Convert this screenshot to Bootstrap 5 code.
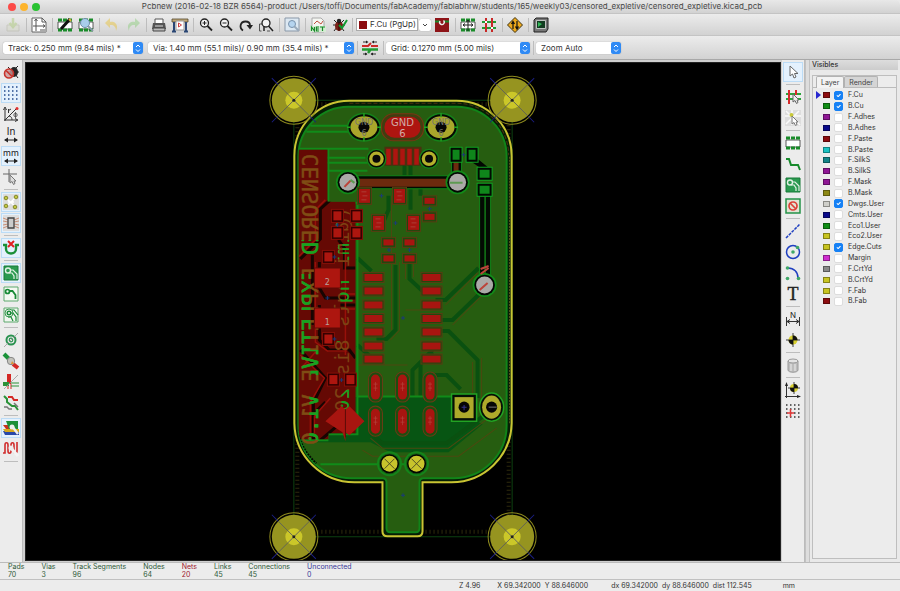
<!DOCTYPE html>
<html lang="en">
<head>
<meta charset="utf-8">
<meta name="viewport" content="width=device-width, initial-scale=1">
<title>Pcbnew</title>
<link href="https://cdn.jsdelivr.net/npm/bootstrap@5.3.0/dist/css/bootstrap.min.css" rel="stylesheet">
<style>
body{font-family:Inter,"Liberation Sans",sans-serif;font-size:8px;line-height:12px;color:#333;background:#e9e9e9}
.titlebar{height:14px;background:linear-gradient(#e8e8e8,#d2d2d2);border-bottom:1px solid #c4c4c4;line-height:13px;color:#484848;border-radius:5px 5px 0 0;flex:none}
.light{width:8px;height:8px;border:0;border-radius:50%;padding:0}
.light-r{background:#fc4b48}.light-y{background:#fdb42c}.light-g{background:#28c231}
.window-title{padding-right:44px}
.toolrow{background:linear-gradient(#ececec,#d2d2d2);border-bottom:1px solid #c4c4c4;gap:1px;padding:0 3px;flex:none}
.toolrow-main{height:22px}
.toolrow-opts{height:24px;border-bottom-color:#a8a8a8}
.tool{width:20px;height:20px;padding:0;border:1px solid transparent;border-radius:0;background:none;display:flex;align-items:center;justify-content:center;flex:none}
.tool svg{width:16px;height:16px;overflow:visible}
.tool.pale{opacity:.45}
.tool.picked{background:#e4f1fd;border-color:#bcdcf6}
.vline{width:1px;height:14px;background:#bdbdbd;margin:0 1px 0 2px;flex:none}
.hline{width:14px;height:1px;background:#bdbdbd;margin:1px 0;flex:none}
.picker{appearance:none;height:12px;border:0;border-radius:2px;padding:0 12px 0 5px;font-size:8px;line-height:12px;color:#333;box-shadow:0 0 1px #888;background:#fff url("data:image/svg+xml,%3Csvg xmlns='http://www.w3.org/2000/svg' width='10' height='12'%3E%3Crect width='10' height='12' rx='2' fill='%232f8af5'/%3E%3Cpath d='M3 5l2-2 2 2M3 7.500l2 2 2-2' fill='none' stroke='white'/%3E%3C/svg%3E") right center no-repeat}
.picker-track{width:140px}.picker-via{width:206px}.picker-grid{width:144px}.picker-zoom{width:85px}
.layerbox{height:13px;width:62px;background:#fff;border:1px solid #aaa;padding:0 2px;gap:3px;margin-left:1px}
.layerbox output{line-height:11px;white-space:nowrap}
.chip{width:8px;height:8px;flex:none;background:#8c0c10}
.dropbtn{width:12px;height:12px;padding:0;border:0;background:#fff;border-radius:2px;display:flex;align-items:center;justify-content:center;box-shadow:0 0 1px #888}
.sidetools{width:23px;gap:1px;padding-top:2px;background:#ececec;border-right:1px solid #bbb;flex:none}
.board{margin:2px 1px 1px 2px;background:#000;border:1px solid #222;min-width:0}
.board svg{width:100%;height:0;min-height:100%;display:block}
.work{background:#cfcfcf;min-height:0}
.sash{width:5px;background:#ddd;border:solid #c2c2c2;border-width:0 1px}
.visibles{width:90px;background:#e9e9e9;padding-right:2px}
.visibles h2{font-size:7px;line-height:10px;margin:0;padding-left:2px;background:linear-gradient(#ddd,#ccc);color:#333}
.layerframe{border:1px solid #bebebe;margin:5px 1px 3px 2px;background:#ececec}
.layertabs{border-bottom:1px solid #bbb;padding-left:3px;height:12px}
.layertabs .nav-link{font-size:7px;line-height:10px;padding:1px 4px 0;color:#444;border:1px solid #b2b2b2;border-bottom:0;border-radius:2px 2px 0 0;background:#d5d5d5;margin:0;height:11px}
.layertabs .nav-link.active{background:#f3f3f3;height:12px}
.layers{height:217px;margin:2px 0 0;font-size:7px;line-height:10px}
.layers li{display:flex;align-items:center;flex:1 1 0;min-height:0;padding-left:10px}
.layers .current{padding-left:3px}
.layers .current::before{content:"";width:0;height:0;border:solid transparent;border-width:4px 0 4px 5px;border-left-color:#2828d0;margin-right:2px}
.swatch{width:7px;height:6px;border:1px solid #0005;margin-right:4px;flex:none}
.layers .form-check-input{width:9px;height:9px;margin:0 5px 0 0;border-radius:2px;border-color:#ddd;flex:none}
.layers .form-check-input:checked{background-color:#1681f5;border-color:#1681f5}
.s-red{background:#8c0c10}.s-green{background:#0f8c14}.s-purple{background:#8e1694}.s-navy{background:#0a0a8a}.s-cyan{background:#19c2c2}.s-teal{background:#128488}.s-olive{background:#8c8815}.s-white{background:#cfcfca}.s-yellow{background:#c8c420}.s-pink{background:#cf2ccf}.s-gray{background:#888}
.stats{background:#ececec;border-top:1px solid #bbb;font-size:7px;line-height:8px;padding:0 8px;gap:17px;color:#2e5a38;flex:none}
.stats dt{font-weight:400}.stats dd{margin:0}
.st-nets{color:#a02030}.st-un{color:#3a3a9a}
.coords{background:#ececec;border-top:1px solid #c0c0c0;font-size:7px;line-height:11px;padding-left:51%;white-space:pre;flex:none}
.gap-a{margin-right:17px}.gap-b{margin-right:23px}.gap-c{margin-right:31px}
</style>
<script src="https://cdn.jsdelivr.net/npm/bootstrap@5.3.0/dist/js/bootstrap.bundle.min.js"></script>
</head>
<body class="d-flex flex-column vh-100">
<svg width="0" height="0" class="position-absolute" aria-hidden="true">
<defs>
<symbol id="mag" viewBox="0 0 16 16"><circle cx="6.500" cy="6" r="4" fill="#f4f4f4" stroke="#222" stroke-width="1.300"/><path d="M9.500 9l4.500 4.500" stroke="#222" stroke-width="1.800"/></symbol>
<symbol id="bug" viewBox="0 0 16 16"><path d="M3 3l3 3M13 3l-3 3M2 8h12M3 14l3-4M13 14l-3-4" stroke="#222" fill="none"/><ellipse cx="8" cy="9" rx="4" ry="5" fill="#7a2018"/><circle cx="8" cy="4" r="2.200" fill="#222"/><path d="M8 5v9" stroke="#300"/></symbol>
<symbol id="chip" viewBox="0 0 16 16"><path d="M1 5h14v7H1z" fill="#fff" stroke="#333" stroke-width=".8"/><g fill="#1a8c2a"><path d="M1 1.500h4v3H1zM6 1.500h4v3H6zM11 1.500h4v3h-4zM1 11.500h4v3H1zM6 11.500h4v3H6zM11 11.500h4v3h-4z"/></g></symbol>
<symbol id="target" viewBox="0 0 16 16"><circle cx="8" cy="8" r="4.500" fill="#d8d030"/><path d="M8 8V3.500A4.500 4.500 0 0 1 12.500 8zM8 8v4.500A4.500 4.500 0 0 1 3.500 8z" fill="#111"/><path d="M8 1v14M1 8h14" stroke="#111" stroke-width=".8"/></symbol>
<symbol id="arrow" viewBox="0 0 16 16"><path d="M5 2v10l2.500-2 1.500 4 2-1-1.500-3.500H13z" fill="#fff" stroke="#666"/></symbol>
<symbol id="zone" viewBox="0 0 16 16"><path d="M1 1h14v14H1z" fill="#2b9a50" stroke="#187a38"/><circle cx="5" cy="5.500" r="2.500" fill="none" stroke="#e2f0e4" stroke-width="1.400"/><path d="M7.500 5h2.500l4 4v5M6 8h3l2 3v3" stroke="#e2f0e4" stroke-width="1.200" fill="none"/></symbol>
</defs>
</svg>

<header class="titlebar d-flex align-items-center">
<div class="d-flex ps-1 gap-1 ms-1 me-2">
<button class="light light-r" aria-label="Close"></button><button class="light light-y" aria-label="Minimize"></button><button class="light light-g" aria-label="Zoom"></button>
</div>
<div class="window-title flex-grow-1 text-center text-nowrap overflow-hidden">Pcbnew (2016-02-18 BZR 6564)-product /Users/toffi/Documents/fabAcademy/fablabhrw/students/165/weekly03/censored_expletive/censored_expletive.kicad_pcb</div>
</header>

<nav class="toolrow toolrow-main d-flex align-items-center" aria-label="Main tools">
<button class="tool pale" aria-label="Save"><svg viewBox="0 0 16 16"><path d="M2 8h12v6H2z" fill="#d8dcc8" stroke="#b0b0a0"/><path d="M8 1v8M4.500 6L8 10l3.500-4" fill="none" stroke="#a8c870" stroke-width="2.500"/></svg></button>
<span class="vline"></span>
<button class="tool" aria-label="Page settings"><svg viewBox="0 0 16 16"><path d="M1 1h10l4 4v10H1z" fill="#fff" stroke="#666"/><path d="M11 1v4h4M5 2v12M2 9h12M3.500 4L5 2l1.500 2M12 7.500L14 9l-2 1.500" fill="none" stroke="#555"/><path d="M9 12h6v3H9z" fill="#aaa"/></svg></button>
<span class="vline"></span>
<button class="tool" aria-label="Module editor"><svg viewBox="0 0 16 16"><use href="#chip"/><path d="M4 12L13 2" stroke="#111" stroke-width="3"/><path d="M12 2l2 2" stroke="#e0b040" stroke-width="2"/></svg></button>
<button class="tool" aria-label="Module viewer"><svg viewBox="0 0 16 16"><use href="#chip"/><circle cx="7" cy="6" r="4.500" fill="#a8cdec" stroke="#6e8ea8"/><path d="M10 9l5 5" stroke="#89a" stroke-width="2"/></svg></button>
<span class="vline"></span>
<button class="tool pale" aria-label="Undo"><svg viewBox="0 0 16 16"><path d="M12 14c3-6-1-10-6-9V1L1 6l5 5V8c3-.5 6 1 6 6z" fill="#e8c030"/></svg></button>
<button class="tool pale" aria-label="Redo"><svg viewBox="0 0 16 16"><path d="M4 14c-3-6 1-10 6-9V1l5 5-5 5V8c-3-.5-6 1-6 6z" fill="#88cc78"/></svg></button>
<span class="vline"></span>
<button class="tool" aria-label="Print"><svg viewBox="0 0 16 16"><path d="M4 2h8v5H4z" fill="#fff" stroke="#555"/><path d="M2 6h12l1 6H1z" fill="#555"/><path d="M2 11h12v3H2z" fill="#bbb" stroke="#444"/><path d="M4 9h8" stroke="#ddd"/></svg></button>
<button class="tool" aria-label="Plot"><svg viewBox="0 0 16 16"><path d="M0 2h16v3H0z" fill="#c0a878" stroke="#54482c" stroke-width=".8"/><path d="M4 4h8v9H4z" fill="#fff" stroke="#999"/><path d="M6.500 6l3 2-3 2z" fill="none" stroke="#d04040"/><path d="M2 5v9M14 5v9M0 14.500h4M12 14.500h4" stroke="#2a4674" stroke-width="2"/></svg></button>
<span class="vline"></span>
<div class="d-flex">
<button class="tool" aria-label="Zoom in"><svg viewBox="0 0 16 16"><use href="#mag"/><path d="M4.500 6h4M6.500 4v4" stroke="#222"/></svg></button>
<button class="tool" aria-label="Zoom out"><svg viewBox="0 0 16 16"><use href="#mag"/><path d="M4.500 6h4" stroke="#222"/></svg></button>
<button class="tool" aria-label="Redraw"><svg viewBox="0 0 16 16"><path d="M5 13.500C1 11 2 4.500 7.500 4.500c3 0 4.500 1.800 4.500 4" fill="none" stroke="#222" stroke-width="1.800"/><path d="M8.500 8h6.500l-3 4.500z" fill="#222"/></svg></button>
<button class="tool" aria-label="Zoom fit"><svg viewBox="0 0 16 16"><path d="M1.500 14V7h3M1.500 14h2M9 14h3" stroke="#555" fill="none"/><circle cx="8" cy="6" r="4" fill="#f4f4f4" stroke="#222" stroke-width="1.300"/><path d="M10.500 9l4.500 5M6 9v5" stroke="#222" stroke-width="1.500"/></svg></button>
</div>
<span class="vline"></span>
<button class="tool" aria-label="Find"><svg viewBox="0 0 16 16"><path d="M1 1h14v13H1z" fill="#dce8f2" stroke="#8a98a8"/><circle cx="8" cy="7" r="3.500" fill="#b5d4ef" stroke="#7892ac"/><path d="M10.500 9.500l4 4" stroke="#9ab" stroke-width="2"/></svg></button>
<span class="vline"></span>
<button class="tool" aria-label="Read netlist"><svg viewBox="0 0 16 16"><path d="M2 1h9l3 3v11H2z" fill="#f4f6f2" stroke="#aaa"/><path d="M4 7l3-3 4 3 2-3" fill="none" stroke="#c05040"/><path d="M0 9h16v6H0z" fill="#d6ecd4"/><path d="M1.500 14v-4l3 4v-4M9 10H6.500v4H9M6.500 12H9M10 10h5M12.500 10v4" fill="none" stroke="#178a28" stroke-width="1.200"/></svg></button>
<button class="tool" aria-label="Design rules check"><svg viewBox="0 0 16 16"><use href="#bug"/><path d="M8 8l3 3 5-8" fill="none" stroke="#129a30" stroke-width="2"/></svg></button>
<span class="vline"></span>
<div class="layerbox d-flex align-items-center"><span class="chip"></span><output>F.Cu (PgUp)</output></div>
<button class="dropbtn" aria-label="Choose layer"><svg width="6" height="4" viewBox="0 0 6 4"><path d="M1 1l2 2 2-2" fill="none" stroke="#444"/></svg></button>
<button class="tool" aria-label="Layer pair"><svg viewBox="0 0 16 16"><path d="M1 1h14v14H1z" fill="#8e1418"/><path d="M1 4.500h5M10 4.500h5" stroke="#1b8a2b" stroke-width="2"/><path d="M6 4a2.300 2.300 0 1 0 3.500-.5" fill="none" stroke="#eee" stroke-width="1.400"/></svg></button>
<span class="vline"></span>
<button class="tool" aria-label="Footprint mode"><svg viewBox="0 0 16 16"><use href="#chip"/><path d="M8 3v11M3 8h10M6.500 5L8 3l1.500 2M5 6.500L3 8l2 1.500M11 6.500L13 8l-2 1.500" stroke="#222" fill="none"/></svg></button>
<button class="tool" aria-label="Track mode"><svg viewBox="0 0 16 16"><path d="M1 5h14M1 11h14" stroke="#239a32" stroke-width="2"/><path d="M5 1v14M11 1v14" stroke="#c82826" stroke-width="2"/><path d="M4 4h2v2H4zM10 10h2v2h-2z" fill="#fff"/></svg></button>
<span class="vline"></span>
<button class="tool" aria-label="Fast push"><svg viewBox="0 0 16 16"><path d="M8 .5L15.500 8 8 15.500.5 8z" fill="#eea91c" stroke="#3c3010"/><path d="M6 12V5M4.500 7L6 4.500 7.500 7M10 4v7M8.500 9.500L10 12l1.500-2.500" fill="none" stroke="#111" stroke-width="1.200"/></svg></button>
<span class="vline"></span>
<button class="tool" aria-label="Scripting console"><svg viewBox="0 0 16 16"><path d="M3 1h12v11l-2 3H1V3z" fill="#777" stroke="#222"/><path d="M3.500 3.500h9v8h-9z" fill="#123c20" stroke="#ddd" stroke-width=".8"/><path d="M5 5l4 2-4 3z" fill="#32b858"/></svg></button>
</nav>

<nav class="toolrow toolrow-opts d-flex align-items-center" aria-label="Options">
<select class="picker picker-track" aria-label="Track width"><option>Track: 0.250 mm (9.84 mils) *</option></select>
<select class="picker picker-via ms-1" aria-label="Via size"><option>Via: 1.40 mm (55.1 mils)/ 0.90 mm (35.4 mils) *</option></select>
<span class="vline"></span>
<button class="tool" aria-label="Auto track width"><svg viewBox="0 0 16 16"><path d="M0 6h6l3-3M9 6h7" stroke="#cc2a28" stroke-width="2" fill="none"/><path d="M0 9.500h16M9 9l-3 4" stroke="#239a32" stroke-width="2.500"/><path d="M1 2h4M11 2h4M1 14h4M9 14h5" stroke="#333"/><path d="M4 .5L6.500 2 4 3.500zM12 .5L9.500 2 12 3.500zM3 12.500L5.500 14 3 15.500zM11 12.500L8.500 14l2.500 1.500z" fill="#222"/></svg></button>
<span class="vline"></span>
<select class="picker picker-grid" aria-label="Grid"><option>Grid: 0.1270 mm (5.00 mils)</option></select>
<span class="vline"></span>
<select class="picker picker-zoom" aria-label="Zoom"><option>Zoom Auto</option></select>
</nav>

<main class="work d-flex flex-grow-1">
<nav class="sidetools d-flex flex-column align-items-center" aria-label="Display options">
<button class="tool" aria-label="Rules checker off"><svg viewBox="0 0 16 16"><g transform="translate(2 0)"><path d="M3 3l3 3M13 2l-3 3M2 8h12M13 14l-3-4" stroke="#222" fill="none"/><ellipse cx="9" cy="8" rx="4" ry="5" fill="#252525"/></g><circle cx="6" cy="9.500" r="4.500" fill="#c99" fill-opacity=".8" stroke="#c8332b" stroke-width="1.600"/><path d="M3 6.500l6 6" stroke="#c8332b" stroke-width="1.600"/></svg></button>
<button class="tool picked" aria-label="Grid"><svg viewBox="0 0 16 16"><path d="M1 2h14M1 6h14M1 10h14M1 14h14" stroke="#234a8c" stroke-width="1.500" stroke-dasharray="1.500 2.500"/></svg></button>
<button class="tool" aria-label="Polar coordinates"><svg viewBox="0 0 16 16"><path d="M2 15V3M1 14h13M2 14L13 3M.5 4L2 1l1.500 3M12 12.500l3 1.500-3 1.500M5.500 3v4M5.500 4.500L8 3M9 14c0-2-1-4-3-4" fill="none" stroke="#333"/><circle cx="12.500" cy="9" r="1.700" fill="none" stroke="#444" stroke-width=".8"/><path d="M12.500 6v6" stroke="#444" stroke-width=".8"/><circle cx="14" cy="2.500" r="1.500" fill="#e03030"/></svg></button>
<button class="tool" aria-label="Inches"><svg viewBox="0 0 16 16"><text x="8" y="8" font-size="10" text-anchor="middle" fill="#222">In</text><path d="M2 13h12" stroke="#222"/><path d="M5 10.500L1 13l4 2.500zM11 10.500l4 2.500-4 2.500z" fill="#222"/></svg></button>
<button class="tool picked" aria-label="Millimetres"><svg viewBox="0 0 16 16"><text x="8" y="8" font-size="9" text-anchor="middle" fill="#222">mm</text><path d="M2 13h12" stroke="#222"/><path d="M5 10.500L1 13l4 2.500zM11 10.500l4 2.500-4 2.500z" fill="#222"/></svg></button>
<button class="tool" aria-label="Cursor shape"><svg viewBox="0 0 16 16"><path d="M6 0v13M0 5h14" stroke="#666"/><path d="M7 6v8l2-1.500 1.500 3 1.500-1-1-2.500h2z" fill="#ddd" stroke="#777"/></svg></button>
<span class="hline"></span>
<button class="tool picked" aria-label="Ratsnest"><svg viewBox="0 0 16 16"><path d="M0 0h16v16H0z" fill="#ddd"/><path d="M3 13L13 3M4 5l9 8M5 8h6" stroke="#fff" stroke-width="1.400"/><g fill="#c2c842" stroke="#84882c"><circle cx="3" cy="4" r="1.800"/><circle cx="13" cy="3" r="1.800"/><circle cx="3" cy="12" r="1.800"/><circle cx="12" cy="13" r="1.800"/></g></svg></button>
<button class="tool picked" aria-label="Module ratsnest"><svg viewBox="0 0 16 16"><path d="M0 0h16v16H0z" fill="#ddd"/><path d="M0 3l5 2M0 6l5 1M0 10l5-1M0 13l5-2M16 3l-5 2M16 6l-5 1M16 10l-5-1M16 13l-5-2" stroke="#c89078"/><path d="M5 3h6v10H5z" fill="#ccc" stroke="#444" stroke-width="1.300"/></svg></button>
<span class="hline"></span>
<button class="tool picked" aria-label="Auto delete"><svg viewBox="0 0 16 16"><path d="M0 5h3v4c0 6 10 6 10 0V5h3" fill="none" stroke="#1a8f38" stroke-width="2.400"/><path d="M5 1l6 6M11 1L5 7" stroke="#e02020" stroke-width="2"/></svg></button>
<span class="hline"></span>
<button class="tool picked" aria-label="Filled zones"><svg><use href="#zone"/></svg></button>
<button class="tool" aria-label="Hide zones"><svg viewBox="0 0 16 16"><path d="M1 1h14v14H1z" fill="#f4f8f2" stroke="#5ca86c"/><circle cx="4.500" cy="5.500" r="2" fill="none" stroke="#178a36" stroke-width="1.700"/><path d="M7 5h2.500l3 4v4" fill="none" stroke="#178a36" stroke-width="1.800"/></svg></button>
<button class="tool" aria-label="Zone outlines"><svg viewBox="0 0 16 16"><path d="M1 1h14v14H1z" fill="#f0f6ef" stroke="#5ca86c"/><circle cx="6" cy="6" r="4" fill="none" stroke="#3c9a55"/><circle cx="6" cy="6" r="1.800" fill="none" stroke="#178a36" stroke-width="1.400"/><path d="M8 6h2l3 4v4M5 10h3l2 4M9 3h2l4 5" fill="none" stroke="#178a36" stroke-width="1.200"/></svg></button>
<span class="hline"></span>
<button class="tool" aria-label="Pad sketch"><svg viewBox="0 0 16 16"><circle cx="8" cy="8" r="4.500" fill="none" stroke="#2a9250" stroke-width="2"/><circle cx="8" cy="8" r="1.800" fill="none" stroke="#2a9250" stroke-width="1.200"/><path d="M1 15L15 1" stroke="#999" stroke-width=".8"/></svg></button>
<button class="tool" aria-label="Via sketch"><svg viewBox="0 0 16 16"><path d="M1 1l5 5" stroke="#1a9238" stroke-width="4"/><path d="M10 11l5 4" stroke="#d42824" stroke-width="4"/><circle cx="8" cy="8" r="3.700" fill="#c4c4bc" stroke="#888"/><path d="M9 8l2 3H8z" fill="#e09030"/></svg></button>
<button class="tool" aria-label="Track sketch"><svg viewBox="0 0 16 16"><path d="M6 0v10" stroke="#d42824" stroke-width="4"/><path d="M5 10v5M8 10v5" stroke="#d42824"/><path d="M0 10h6" stroke="#2a9238" stroke-width="4"/><path d="M8 9h8M8 12h8" stroke="#2a9238"/><path d="M1 15L15 1" stroke="#999" stroke-width=".8"/></svg></button>
<button class="tool" aria-label="High contrast"><svg viewBox="0 0 16 16"><path d="M1 1l3 3v3l5 4h3l3 4" fill="none" stroke="#2a9238" stroke-width="2"/><path d="M5 2h4l2 3h4" fill="none" stroke="#d42824" stroke-width="2"/><path d="M1 12h3l2 2h3M11 8l4 4" fill="none" stroke="#777" stroke-width="1.500"/></svg></button>
<span class="hline"></span>
<button class="tool picked" aria-label="Layers manager"><svg viewBox="0 0 16 16"><path d="M0 11h16v4H2z" fill="#2848a8"/><path d="M0 9h16v3H2z" fill="#d4a820"/><path d="M0 5h15v4H3z" fill="#c83020"/><path d="M3 1h12v8H6z" fill="#1c8f38"/><path d="M9 6l6 8" stroke="#eee" stroke-width="2.500"/><circle cx="9" cy="7" r="2.500" fill="#eee"/></svg></button>
<button class="tool" aria-label="Microwave tools"><svg viewBox="0 0 16 16"><path d="M0 12h2V4c0-3 3-3 3 0v6c0 3 3 3 3 0V4c0-3 3-3 3 0v6c0 3 3 3 3 0V1" fill="none" stroke="#d02c2c" stroke-width="1.600"/><path d="M8 7l7 8" stroke="#f4f4f4" stroke-width="3"/><circle cx="8" cy="7" r="2.500" fill="#eee"/></svg></button>
<span class="hline"></span>
</nav>

<section class="board flex-grow-1" aria-label="Board canvas">
<svg viewBox="26 63 753 497" preserveAspectRatio="xMidYMid slice" role="img" aria-label="Printed circuit board">
<defs>
<g id="hole"><circle r="24" fill="none" stroke="#8e8a1e"/><circle r="22" fill="#969420"/><circle r="8.500" fill="#cbc729"/><path d="M-16-16L16 16M-16 16L16-16" stroke="#5c5f5c" stroke-width=".9"/><path d="M-22-22l6 6M22 22l-6-6M-22 22l6-6M22-22l-6 6" stroke="#1a1e80"/><circle r="1.500" fill="#222"/></g>
<g id="gndpad"><ellipse rx="17" ry="14.500" fill="#15831a"/><ellipse rx="15.500" ry="13" fill="#050a03"/><ellipse rx="13.500" ry="11" fill="#aaa62b"/><circle r="5.500" fill="#060606"/><path d="M-17 0h4M13 0h4M0-14v4M0 10v4" stroke="#23a020" stroke-width="1.500"/></g>
<g id="usbpad"><circle r="10" fill="#15831a"/><circle r="8.700" fill="#050a03"/><circle r="7.300" fill="#b4b02c"/><circle r="4" fill="#080808"/></g>
<g id="via"><circle r="12" fill="#128a19"/><circle r="10.300" fill="#030803"/><circle r="8.500" fill="#aaa9a7"/></g>
<g id="exit"><circle r="12.500" fill="#14851a"/><circle r="10.500" fill="#175c12"/><circle r="9.500" fill="#020602"/><circle r="8" fill="#c8c42c"/><path d="M-5-5L5 5M-5 5L5-5" stroke="#474722" stroke-width=".9"/></g>
<g id="icpad"><rect x="-10.500" y="-5" width="21" height="10" fill="#22480e" stroke="#573e12"/><rect x="-9" y="-3.500" width="18" height="7" fill="#a81510"/></g>
<g id="smd"><rect x="-7" y="-5" width="14" height="10" fill="#22480e" stroke="#573e12"/><rect x="-5" y="-3" width="10" height="6" fill="#a81510"/></g>
<g id="smdtall"><rect x="-7" y="-8.500" width="14" height="17" fill="#22480e" stroke="#573e12"/><rect x="-5.500" y="-7" width="11" height="14" fill="#a81510"/><path d="M-3-4h5M-2 0h5M-3 4h5" stroke="#b05048" stroke-width=".7"/></g>
<g id="slot"><rect x="-7" y="-15" width="14" height="30" rx="7" fill="#1d4e0f" stroke="#6a3c16"/><rect x="-4.500" y="-12.500" width="9" height="25" rx="4.500" fill="#a81510"/><path d="M0-5v9M-2-3h4M-2 1h4" stroke="#b4443c" stroke-width=".7"/></g>
<g id="rpad"><rect x="-6" y="-6.500" width="12" height="13" fill="#300" stroke="#861008"/><rect x="-4" y="-4.500" width="8" height="9" fill="#ad160f"/></g>
<clipPath id="redzone"><path d="M298 150h29v52h28v231h-27v6h-30z"/></clipPath>
<clipPath id="inside"><path d="M349 107H456a50 50 0 0 1 50 50V425a53 53 0 0 1-53 53H351a53 53 0 0 1-53-53V157a50 50 0 0 1 51-50z"/></clipPath>
<clipPath id="litleft" clipPathUnits="userSpaceOnUse"><path d="M298 240h23v22h-23zM298 274h12v95h-12zM310 350h11v25h-11zM309 385h12v55h-12z"/></clipPath>
<clipPath id="litright" clipPathUnits="userSpaceOnUse"><path d="M330 207h9v20h-9zM342 240h10v20h-10zM330 245h9v14h-9zM340 268h12v40h-12zM330 328h10v14h-10zM330 375h10v12h-10zM341 390h12v37h-12z"/></clipPath>
</defs>
<rect x="26" y="63" width="753" height="497" fill="#000"/>
<path d="M293.500 100.500h218v436h-218z" fill="none" stroke="#0d4010"/>
<path d="M297 104.500h211v427H297z" fill="none" stroke="#2e2a0c" stroke-width="4" stroke-dasharray="1 3"/>
<path d="M349 101H456a55 55 0 0 1 55 55V423a60 60 0 0 1-60 59H422V531q0 5-5 5H387q-5 0-5-5V482H354a60 60 0 0 1-60-59V156a55 55 0 0 1 55-55z" fill="#061e05" stroke="#c9c433" stroke-width="2"/>
<path d="M349 103.500H456a52 52 0 0 1 52 52" fill="none" stroke="#4c3212" stroke-dasharray="4 2"/>
<path d="M509 157V423" stroke="#5a5a1c" stroke-dasharray="2 1"/>
<path d="M349 107H456a50 50 0 0 1 50 50V425a53 53 0 0 1-53 53H423q-4 0-4 4V528q0 4-4 4H390q-4 0-4-4V482q0-4-4-4H351a53 53 0 0 1-53-53V157a50 50 0 0 1 51-50z" fill="#265d10" stroke="#118419" stroke-width="2"/>
<g clip-path="url(#inside)">
<path d="M355 397H452v22h20l10 5-34 28H390l-20-10H300v-9h55z" fill="#075513"/>
<g fill="none" stroke="#0a5010" stroke-width="4">
<path d="M395 265v65l-9 9h-10M409 262v17l13 12M404 160v22M410 150v60M388 196v14l-4 10M420 196v-16M478 268l-33 32h-10M482 291l-30 29h-16M440 331h8l29 29v38M412 398v-28l20-20M420 398v-34l12-12M357 258l14 13M357 345l20 18M434 375h12l14 14M370 433l12 10h64l38-28"/>
</g>
<g fill="none" stroke="#4c4810">
<path d="M399 262v68l-9 10M391 196v134M405 262v17M413 262v15M445 305l32-32M452 325l34-34M472 362v36M481 358v42M370 438l12 10h66l40-30M362 450l10 6h86l38-28M357 365h50M405 310h30"/>
</g>
<g stroke="#108b19" stroke-width="2" fill="none"><path d="M310 126h37M306 132h42M299 149h69M299 158h66M299 163h68M299 171h68M328 150v53h29v231h-30v6h-27M357 396.500h97M320 464h57M401 464h4"/></g>
<path d="M298 150h29v52h28v231h-27v6h-30z" fill="#650904"/>
<g clip-path="url(#redzone)">
<g fill="none" stroke="#170502" stroke-width="3"><path d="M330 200l-10 9v30l-20 20M338 240l6 8v20h12M312 255v70M319 262v26l6 10h30M340 298h16M340 305h16M319 305v35l10 10h20l6 8M300 350l25 28-12 25v35M325 402l-12 12v26M320 440l20-17"/></g>
<g fill="none" stroke="#97100a" stroke-width="1.500"><path d="M325 200l-10 10v30l-17 17M315 262v80l12 9h20M345 250v105M315 352l-13 15M300 355l24 23-14 24v32M330 398l-16 18v18M340 294h16M340 309h16"/></g>
</g>
<g font-family="DejaVu Sans Mono, monospace" font-size="21">
<text transform="translate(318 154) rotate(90) scale(1 -1)" fill="#7f4d14" stroke="#7f4d14" stroke-width=".5">CENSORED EXPLETIVE V1.0</text>
<g clip-path="url(#litleft)"><text transform="translate(318 154) rotate(90) scale(1 -1)" fill="#15a321" stroke="#15a321" stroke-width=".6">CENSORED EXPLETIVE V1.0</text></g>
<text transform="translate(349 207) rotate(90) scale(1 -1)" fill="#7d4213" font-size="20">(@imi hqls 8is 201</text>
<g clip-path="url(#litright)"><text transform="translate(349 207) rotate(90) scale(1 -1)" fill="#15a321" font-size="20">(@imi hqls 8is 201</text></g>
</g>
<path d="M296 180V423a58 58 0 0 0 20 40" fill="none" stroke="#020a02" stroke-width="2" stroke-dasharray="2 1"/>
</g>
<use href="#rpad" x="337" y="216"/><use href="#rpad" x="356" y="216"/><use href="#rpad" x="337" y="233"/><use href="#rpad" x="356" y="233"/>
<use href="#rpad" x="328" y="257"/><use href="#rpad" x="328" y="339"/><use href="#rpad" x="333" y="379.500"/><use href="#rpad" x="350" y="379.500"/>
<g fill="#ad160f" stroke="#620b06"><path d="M314 268h26v20h-26zM314 308h26v20h-26z"/></g>
<path d="M325 421l16-15 4 3 4-3 15 15-15 14-4-3v9l-3-9z" fill="#a81510"/><path d="M345 409v28" stroke="#5d0c08"/>
<g font-family="DejaVu Sans, sans-serif" font-size="8" fill="#b9a19d" text-anchor="middle"><text x="327" y="285">2</text><text x="327" y="325">1</text></g>
<path d="M348 176H462V189H348zM451 160h10v20h-10zM479 196h11v82h-11z" fill="#030b03" stroke="#118419"/>
<path d="M355 179h97v8h-97zM453 162h5v14h-5z" fill="#6c2a0e"/><path d="M484.500 197v76" stroke="#127a17" stroke-width="1.500"/>
<path d="M472 161l13 9M476 160l11 9" stroke="#020602" stroke-width="3"/>
<g fill="#0f861b" stroke="#0fa321" stroke-width="4"><path d="M451 149h9v12h-9zM467 149h9v12h-9zM478 169h12v10h-12zM478 185h12v10h-12z"/></g>
<g fill="#0f861b" stroke="#020a02" stroke-width="2"><path d="M451 149h9v12h-9zM467 149h9v12h-9zM478 169h12v10h-12zM478 185h12v10h-12z"/></g>
<use href="#via" x="347.500" y="182.500"/><use href="#via" x="457" y="182.500"/><use href="#via" x="484" y="285"/>
<path d="M344 187l6-6M479 290l8-7M480 269l8-3M480 274l8-6" stroke="#bc443a" stroke-width="2"/><path d="M449 183h13M350 180l4 3" stroke="#5d9a52" stroke-width="2"/>
<rect x="381" y="114" width="42" height="27" rx="12" fill="#413e10" stroke="#7a3512"/><rect x="384" y="117" width="36" height="21" rx="10" fill="#ae1510"/>
<use href="#gndpad" x="363.500" y="127.500"/><use href="#gndpad" x="440.500" y="127.500"/>
<g font-family="DejaVu Sans, sans-serif" font-size="10" text-anchor="middle"><g fill="#d2aba7"><text x="402" y="126">GND</text><text x="402" y="137">6</text></g><g fill="#74746c" font-size="8"><text x="363.500" y="125">GND</text><text x="363.500" y="136">6</text><text x="440.500" y="125">GND</text><text x="440.500" y="136">6</text></g></g>
<path d="M384 147h37v19h-37z" fill="#4a310f"/><path d="M388 149v16M395 149v16M402 149v16M409 149v16M416 149v16" stroke="#ae1510" stroke-width="4.500"/>
<use href="#usbpad" x="376" y="159"/><use href="#usbpad" x="428.500" y="159"/>
<use href="#smdtall" x="364" y="196"/><use href="#smdtall" x="399" y="196"/><use href="#smdtall" x="378" y="223"/><use href="#smdtall" x="413" y="223"/>
<use href="#smd" x="429" y="201"/><use href="#smd" x="429" y="217"/><use href="#smd" x="388" y="242.500"/><use href="#smd" x="409" y="242.500"/><use href="#smd" x="388" y="258.500"/><use href="#smd" x="409" y="258.500"/>
<use href="#icpad" x="373" y="277.500"/><use href="#icpad" x="373" y="291"/><use href="#icpad" x="373" y="305"/><use href="#icpad" x="373" y="318.500"/><use href="#icpad" x="373" y="332"/><use href="#icpad" x="373" y="346"/><use href="#icpad" x="373" y="359"/>
<use href="#icpad" x="431" y="277.500"/><use href="#icpad" x="431" y="291"/><use href="#icpad" x="431" y="305"/><use href="#icpad" x="431" y="318.500"/><use href="#icpad" x="431" y="332"/><use href="#icpad" x="431" y="346"/><use href="#icpad" x="431" y="359"/>
<use href="#slot" x="375" y="387"/><use href="#slot" x="402" y="387"/><use href="#slot" x="429.500" y="387"/><use href="#slot" x="375" y="421"/><use href="#slot" x="402" y="421"/><use href="#slot" x="429.500" y="421"/>
<path d="M451 394h25v27h-25z" fill="#061005" stroke="#22a323" stroke-width="1.500"/><path d="M454 397h19v21h-19z" fill="#aeaa2b"/><circle cx="463.500" cy="407" r="5.500" fill="#060606"/><path d="M461 407h5M463.500 405v5" stroke="#35358c"/>
<ellipse cx="491" cy="407" rx="12" ry="14" fill="#061005" stroke="#22a323" stroke-width="1.500"/><ellipse cx="491" cy="407" rx="9.500" ry="11.500" fill="#aeaa2b"/><circle cx="491" cy="407" r="5.500" fill="#060606"/><path d="M488 407h8" stroke="#777"/>
<use href="#exit" x="389" y="463.500"/><use href="#exit" x="416" y="463.500"/>
<path d="M381 194v4M379 196h4M395 221v4M393 223h4M402.500 316v4M400.500 318h4M429 207v4M427 209h4M388.500 248v4M386.500 250h4M409 248v4M407 250h4M463 153v4M461 155h4M402.500 493v4M400.500 495h4M337 223v4M335 225h4M327 296v4M325 298h4M334 255v4M332 257h4M334 337v4M332 339h4M341 378v4M339 380h4" stroke="#1b3a78"/>
<use href="#hole" x="293.500" y="100.500"/><use href="#hole" x="511.500" y="100.500"/><use href="#hole" x="293.500" y="536.500"/><use href="#hole" x="511.500" y="536.500"/>
</svg>
</section>

<nav class="sidetools d-flex flex-column align-items-center" aria-label="Drawing tools">
<button class="tool picked" aria-label="Select"><svg><use href="#arrow"/></svg></button>
<span class="hline"></span>
<button class="tool" aria-label="Highlight net"><svg viewBox="0 0 16 16"><path d="M1 5h15M1 10h15" stroke="#2aa53a" stroke-width="1.800"/><path d="M4 1v14M11 1v5" stroke="#d62a2a" stroke-width="2"/><path d="M8 5v8l2-1.500 1.500 3 1.500-1-1-2.500h2z" fill="#eee" stroke="#666"/></svg></button>
<button class="tool" aria-label="Local ratsnest"><svg viewBox="0 0 16 16"><path d="M0 0h16v16H0z" fill="#ddd"/><path d="M1 1l14 14M1 14L14 1M7 0v15M0 6h16" stroke="#fafafa" stroke-width="1.500"/><circle cx="6.500" cy="5" r="2" fill="#c8c838"/><path d="M7 6v8l2-1.500 1.500 3 1.500-1-1-2.500h2z" fill="#fff" stroke="#777"/></svg></button>
<span class="hline"></span>
<button class="tool" aria-label="Add footprint"><svg><use href="#chip"/></svg></button>
<button class="tool" aria-label="Add track"><svg viewBox="0 0 16 16"><path d="M1 3h3l2 6h7l2 5" fill="none" stroke="#178a2c" stroke-width="2"/></svg></button>
<button class="tool" aria-label="Add zone"><svg><use href="#zone"/></svg></button>
<button class="tool" aria-label="Add keepout"><svg viewBox="0 0 16 16"><path d="M1 1h14v14H1z" fill="#e3e3d4" stroke="#249248" stroke-width="1.500"/><circle cx="8" cy="8" r="4" fill="none" stroke="#dc4038" stroke-width="1.700"/><path d="M5 5l6 6" stroke="#dc4038" stroke-width="1.700"/></svg></button>
<span class="hline"></span>
<button class="tool" aria-label="Line"><svg viewBox="0 0 16 16"><path d="M1 15L15 1" stroke="#2040c0" stroke-width="1.500" stroke-dasharray="3 1"/></svg></button>
<button class="tool" aria-label="Circle"><svg viewBox="0 0 16 16"><circle cx="8" cy="8" r="6.500" fill="none" stroke="#2040c0" stroke-width="1.500"/><circle cx="8" cy="8" r="1.800" fill="#40a868"/><circle cx="12.500" cy="3.500" r="1.800" fill="#40a868"/></svg></button>
<button class="tool" aria-label="Arc"><svg viewBox="0 0 16 16"><path d="M3 3c6 0 10 4 10 10" fill="none" stroke="#2040c0" stroke-width="1.500"/><g fill="#40a868"><circle cx="2.500" cy="3" r="1.800"/><circle cx="13.500" cy="13.500" r="1.800"/><circle cx="2.500" cy="13.500" r="1.800"/></g></svg></button>
<button class="tool" aria-label="Text"><svg viewBox="0 0 16 16"><text x="8" y="14" font-family="Liberation Serif, serif" font-size="18" text-anchor="middle" fill="#222" stroke="#222" stroke-width=".4">T</text></svg></button>
<span class="hline"></span>
<button class="tool" aria-label="Dimension"><svg viewBox="0 0 16 16"><text x="8" y="7" font-size="8" text-anchor="middle" fill="#222">N</text><path d="M1.500 6v9M14.500 6v9M2 10.500h12M5 8.500l-3 2 3 2M11 8.500l3 2-3 2" fill="none" stroke="#333"/></svg></button>
<button class="tool" aria-label="Target"><svg><use href="#target"/></svg></button>
<span class="hline"></span>
<button class="tool" aria-label="Delete"><svg viewBox="0 0 16 16"><path d="M3 4v9c0 3 10 3 10 0V4z" fill="#bdbdbd" stroke="#999"/><ellipse cx="8" cy="4" rx="5" ry="2" fill="#e4e4e4" stroke="#999"/><path d="M6 7v7M10 7v7" stroke="#eee"/></svg></button>
<span class="hline"></span>
<button class="tool" aria-label="Offset origin"><svg viewBox="0 0 16 16"><g transform="translate(3 0)"><circle cx="6" cy="6" r="4" fill="#d8d030"/><path d="M6 6V2a4 4 0 0 1 4 4zM6 6v4a4 4 0 0 1-4-4z" fill="#111"/><path d="M6 0v12M0 6h12" stroke="#111" stroke-width=".8"/></g><path d="M1.500 16V2M0 14.500h14" stroke="#333"/><path d="M0 4l1.500-4L3 4zM12 13l4 1.500-4 1.500z" fill="#222"/></svg></button>
<button class="tool" aria-label="Grid origin"><svg viewBox="0 0 16 16"><path d="M1 2h14M1 6h14M1 10h14M1 14h14" stroke="#333" stroke-width="1.500" stroke-dasharray="1.500 2.500"/><path d="M5.500 6v8M2 10h7" stroke="#e03838" stroke-width="1.500"/></svg></button>
</nav>
<div class="sash"></div>
<aside class="visibles d-flex flex-column">
<h2>Visibles</h2>
<div class="layerframe flex-grow-1">
<ul class="layertabs nav flex-nowrap" role="tablist"><li class="nav-item"><button class="nav-link active" role="tab">Layer</button></li><li class="nav-item"><button class="nav-link" role="tab">Render</button></li></ul>
<ul class="layers list-unstyled d-flex flex-column">
<li class="current"><span class="swatch s-red"></span><input class="form-check-input" type="checkbox" id="l1" checked><label for="l1">F.Cu</label></li>
<li><span class="swatch s-green"></span><input class="form-check-input" type="checkbox" id="l2" checked><label for="l2">B.Cu</label></li>
<li><span class="swatch s-purple"></span><input class="form-check-input" type="checkbox" id="l3"><label for="l3">F.Adhes</label></li>
<li><span class="swatch s-navy"></span><input class="form-check-input" type="checkbox" id="l4"><label for="l4">B.Adhes</label></li>
<li><span class="swatch s-red"></span><input class="form-check-input" type="checkbox" id="l5"><label for="l5">F.Paste</label></li>
<li><span class="swatch s-cyan"></span><input class="form-check-input" type="checkbox" id="l6"><label for="l6">B.Paste</label></li>
<li><span class="swatch s-teal"></span><input class="form-check-input" type="checkbox" id="l7"><label for="l7">F.SilkS</label></li>
<li><span class="swatch s-purple"></span><input class="form-check-input" type="checkbox" id="l8"><label for="l8">B.SilkS</label></li>
<li><span class="swatch s-purple"></span><input class="form-check-input" type="checkbox" id="l9"><label for="l9">F.Mask</label></li>
<li><span class="swatch s-olive"></span><input class="form-check-input" type="checkbox" id="l10"><label for="l10">B.Mask</label></li>
<li><span class="swatch s-white"></span><input class="form-check-input" type="checkbox" id="l11" checked><label for="l11">Dwgs.User</label></li>
<li><span class="swatch s-navy"></span><input class="form-check-input" type="checkbox" id="l12"><label for="l12">Cmts.User</label></li>
<li><span class="swatch s-green"></span><input class="form-check-input" type="checkbox" id="l13"><label for="l13">Eco1.User</label></li>
<li><span class="swatch s-yellow"></span><input class="form-check-input" type="checkbox" id="l14"><label for="l14">Eco2.User</label></li>
<li><span class="swatch s-yellow"></span><input class="form-check-input" type="checkbox" id="l15" checked><label for="l15">Edge.Cuts</label></li>
<li><span class="swatch s-pink"></span><input class="form-check-input" type="checkbox" id="l16"><label for="l16">Margin</label></li>
<li><span class="swatch s-gray"></span><input class="form-check-input" type="checkbox" id="l17"><label for="l17">F.CrtYd</label></li>
<li><span class="swatch s-yellow"></span><input class="form-check-input" type="checkbox" id="l18"><label for="l18">B.CrtYd</label></li>
<li><span class="swatch s-yellow"></span><input class="form-check-input" type="checkbox" id="l19"><label for="l19">F.Fab</label></li>
<li><span class="swatch s-red"></span><input class="form-check-input" type="checkbox" id="l20"><label for="l20">B.Fab</label></li>
</ul>
</div>
</aside>
</main>

<dl class="stats d-flex mb-0">
<div><dt>Pads</dt><dd>70</dd></div><div><dt>Vias</dt><dd>3</dd></div><div><dt>Track Segments</dt><dd>96</dd></div><div><dt>Nodes</dt><dd>64</dd></div><div class="st-nets"><dt>Nets</dt><dd>20</dd></div><div><dt>Links</dt><dd>45</dd></div><div><dt>Connections</dt><dd>45</dd></div><div class="st-un"><dt>Unconnected</dt><dd>0</dd></div>
</dl>
<footer class="coords d-flex"><span class="gap-a">Z 4.96</span><span class="gap-b">X 69.342000  Y 88.646000</span><span class="gap-c">dx 69.342000  dy 88.646000  dist 112.545</span><span>mm</span></footer>
</body>
</html>
